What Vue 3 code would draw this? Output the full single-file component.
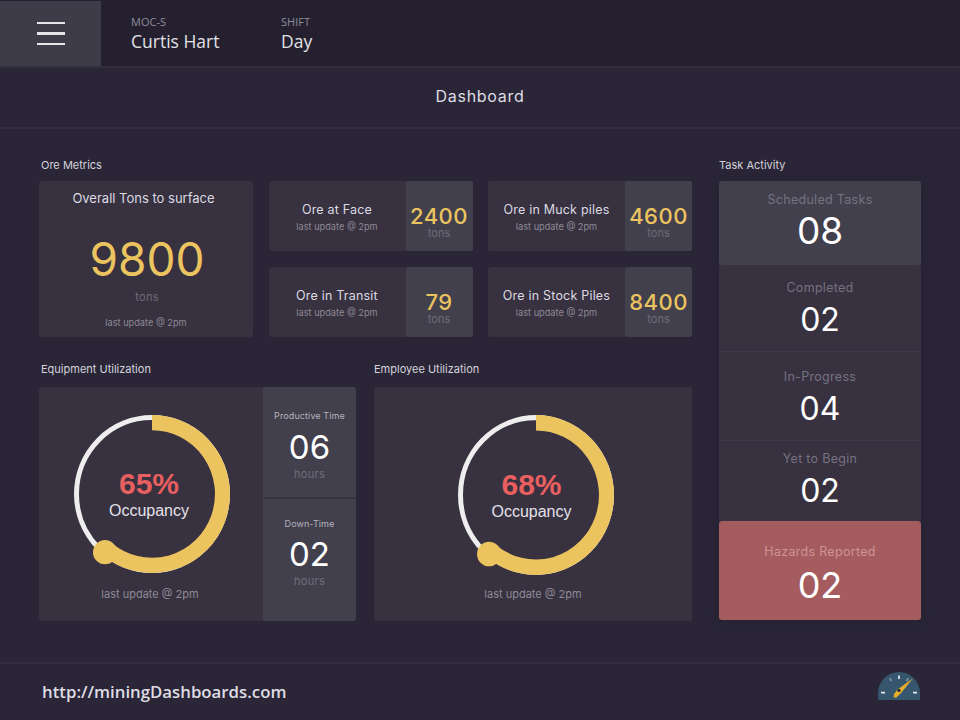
<script setup>
const oreCards = [
  { title: 'Ore at Face', value: '2400' },
  { title: 'Ore in Muck piles', value: '4600' },
  { title: 'Ore in Transit', value: '79' },
  { title: 'Ore in Stock Piles', value: '8400' }
];

const times = [
  { title: 'Productive Time', value: '06' },
  { title: 'Down-Time', value: '02' }
];

const tasks = [
  { title: 'Scheduled Tasks', value: '08', cls: 'scheduled' },
  { title: 'Completed', value: '02', cls: 'completed' },
  { title: 'In-Progress', value: '04', cls: 'progress' },
  { title: 'Yet to Begin', value: '02', cls: 'begin' },
  { title: 'Hazards Reported', value: '02', cls: 'hazards' }
];
</script>

<template>
  <div class="app">
    <header class="topbar">
      <div class="menu">
        <span></span><span></span><span></span>
      </div>
      <div class="who first">
        <div class="who-label">MOC-S</div>
        <div class="who-value">Curtis Hart</div>
      </div>
      <div class="who">
        <div class="who-label">SHIFT</div>
        <div class="who-value">Day</div>
      </div>
    </header>

    <div class="title">Dashboard</div>

    <main class="main">
      <div class="left">
        <div class="label inset">Ore Metrics</div>
        <div class="ore-grid">
          <div class="card overall">
            <div class="overall-title">Overall Tons to surface</div>
            <div class="overall-value">9800</div>
            <div class="overall-unit">tons</div>
            <div class="update small">last update @ 2pm</div>
          </div>
          <div v-for="c in oreCards" :key="c.title" class="card ore">
            <div class="ore-text">
              <div class="ore-title">{{ c.title }}</div>
              <div class="update tiny">last update @ 2pm</div>
            </div>
            <div class="ore-side">
              <div class="ore-value">{{ c.value }}</div>
              <div class="ore-unit">tons</div>
            </div>
          </div>
        </div>

        <div class="util-grid">
          <section>
            <div class="label inset">Equipment Utilization</div>
            <div class="card util">
              <div class="gauge-wrap">
                <div class="gauge">
                  <svg width="160" height="162" viewBox="0 0 160 160" preserveAspectRatio="none">
                    <circle cx="80" cy="80" r="75.5" fill="none" stroke="#eeeeee" stroke-width="5" />
                    <path d="M80 9.5A70.5 70.5 0 1 1 35.6 134.8" fill="none" stroke="#ecc45f" stroke-width="15" />
                    <circle cx="33" cy="137.5" r="12" fill="#ecc45f" />
                  </svg>
                  <div class="gauge-text">
                    <div class="pct">65%</div>
                    <div class="occ">Occupancy</div>
                  </div>
                </div>
                <div class="update plain">last update @ 2pm</div>
              </div>
              <div class="times">
                <div v-for="t in times" :key="t.title" class="time">
                  <div class="time-title">{{ t.title }}</div>
                  <div class="time-value">{{ t.value }}</div>
                  <div class="time-unit">hours</div>
                </div>
              </div>
            </div>
          </section>
          <section>
            <div class="label">Employee Utilization</div>
            <div class="card util">
              <div class="gauge-wrap employee">
                <div class="gauge">
                  <svg width="160" height="164" viewBox="0 0 160 160" preserveAspectRatio="none">
                    <circle cx="80" cy="80" r="75.5" fill="none" stroke="#eeeeee" stroke-width="5" />
                    <path d="M80 9.5A70.5 70.5 0 1 1 35.6 134.8" fill="none" stroke="#ecc45f" stroke-width="15" />
                    <circle cx="33" cy="137.5" r="12" fill="#ecc45f" />
                  </svg>
                  <div class="gauge-text">
                    <div class="pct">68%</div>
                    <div class="occ">Occupancy</div>
                  </div>
                </div>
                <div class="update plain">last update @ 2pm</div>
              </div>
            </div>
          </section>
        </div>
      </div>

      <aside class="right">
        <div class="label">Task Activity</div>
        <div class="tasks">
          <div v-for="t in tasks" :key="t.title" :class="['task', t.cls]">
            <div class="task-title">{{ t.title }}</div>
            <div class="task-value">{{ t.value }}</div>
          </div>
        </div>
      </aside>
    </main>

    <footer class="footer">
      <div class="url">http://miningDashboards.com</div>
      <svg class="speedo" width="42" height="28" viewBox="0 0 42 28">
        <path d="M0 28V21a21 21 0 0 1 42 0v7z" fill="#35566c" />
        <path d="M3 20.6h4M35 20.6h4" stroke="#e8e8e8" stroke-width="1.6" />
        <path d="M21 3.5v3.6" stroke="#e8e8e8" stroke-width="1.8" />
        <path d="M11.8 6.2l1.6 2.8M30.2 6.2l-1.6 2.8" stroke="#8a9aa6" stroke-width="1.6" />
        <path d="M35 6.2L23.5 20.6 18.5 25.4 15.5 25.4 16 22 19.8 17.2z" fill="#e5ad2a" />
        <circle cx="21" cy="18.4" r="1.6" fill="#2a2638" />
      </svg>
    </footer>
  </div>
</template>

<style scoped>
.app,
.app * {
  box-sizing: border-box;
}

.app {
  width: 960px;
  height: 720px;
  display: flex;
  flex-direction: column;
  background: #2a2638;
  font-family: Inter, "Liberation Sans", sans-serif;
  color: #e4e2e8;
  overflow: hidden;
}

.topbar {
  height: 68px;
  flex-shrink: 0;
  display: flex;
  background: #242030;
  border-bottom: 2px solid #322e40;
}

.menu {
  width: 101px;
  margin-top: 1px;
  display: flex;
  flex-direction: column;
  align-items: center;
  justify-content: center;
  gap: 8px;
  background: #3f3c49;
}

.menu span {
  width: 28px;
  height: 2.5px;
  background: #e6e5e8;
}

.who {
  padding-top: 14px;
  font-family: "Open Sans", sans-serif;
}

.who.first {
  margin-left: 30px;
  width: 150px;
}

.who-label {
  font-size: 11px;
  line-height: 16px;
  color: #8f8c98;
}

.who-value {
  font-size: 17.5px;
  line-height: 22px;
  font-weight: 500;
  color: #e2e1e5;
}

.title {
  height: 61px;
  flex-shrink: 0;
  display: flex;
  align-items: center;
  justify-content: center;
  padding-bottom: 4px;
  font-size: 16px;
  letter-spacing: 0.7px;
  color: #dfdde3;
  border-bottom: 2px solid #322e40;
}

.main {
  flex: 1;
  display: flex;
  padding: 28px 0 0 39px;
  gap: 27px;
}

.left {
  width: 653px;
}

.right {
  width: 202px;
}

.label {
  height: 17px;
  margin-bottom: 7px;
  font-size: 11px;
  line-height: 17px;
  color: #d5d3da;
}

.label.inset {
  padding-left: 2px;
}

.card {
  background: #373140;
  border-radius: 3px;
}

.ore-grid {
  display: grid;
  grid-template-columns: 214px 204px 204px;
  grid-template-rows: 70px 70px;
  column-gap: 15.5px;
  row-gap: 16px;
}

.overall {
  grid-row: span 2;
  display: flex;
  flex-direction: column;
  align-items: center;
}

.overall-title {
  margin-top: 9px;
  padding-right: 5px;
  font-size: 13px;
  line-height: 16px;
  color: #dcdae0;
}

.overall-value {
  margin-top: 25px;
  margin-left: 2px;
  font-size: 46px;
  line-height: 56px;
  color: #ecc45f;
}

.overall-unit {
  margin-top: 3px;
  margin-left: 2px;
  font-size: 11px;
  line-height: 14px;
  letter-spacing: 0.3px;
  color: #6f6b78;
}

.update {
  color: #8e8b96;
}

.update.small {
  margin-top: 13px;
  font-size: 9.2px;
  line-height: 12px;
}

.update.tiny {
  font-size: 9.2px;
  line-height: 12px;
}

.update.plain {
  margin-top: 12px;
  padding-right: 3px;
  font-size: 11px;
  line-height: 14px;
}

.ore {
  display: flex;
}

.ore-text {
  flex: 1;
  display: flex;
  flex-direction: column;
  align-items: center;
  justify-content: center;
  gap: 4px;
  padding-top: 2px;
}

.ore-title {
  font-size: 12.5px;
  line-height: 15px;
  letter-spacing: 0.2px;
  color: #dcdae0;
}

.ore-side {
  width: 67px;
  display: flex;
  flex-direction: column;
  align-items: center;
  justify-content: center;
  padding-top: 13px;
  background: #43404e;
  border-radius: 3px;
}

.ore-value {
  font-size: 22px;
  line-height: 20px;
  font-weight: 500;
  letter-spacing: 0.5px;
  color: #ecc45f;
}

.ore-unit {
  font-size: 11px;
  line-height: 14px;
  color: #6f6b78;
}

.util-grid {
  margin-top: 24px;
  display: grid;
  grid-template-columns: 317px 318px;
  column-gap: 18px;
}

.util-grid .label {
  margin-bottom: 9px;
}

.util {
  height: 234px;
  display: flex;
}

.gauge-wrap {
  flex: 1;
  display: flex;
  flex-direction: column;
  align-items: center;
  padding-top: 26px;
  padding-left: 1px;
}

.gauge-wrap.employee {
  padding-left: 5px;
}

.gauge-wrap.employee .gauge-text {
  padding-right: 8px;
}

.gauge-wrap.employee .update.plain {
  margin-top: 10px;
  padding-right: 5px;
}

.gauge {
  display: grid;
  place-items: center;
}

.gauge svg,
.gauge-text {
  grid-area: 1 / 1;
}

.gauge-text {
  padding-right: 5px;
  text-align: center;
  font-family: "Liberation Sans", sans-serif;
}

.pct {
  font-size: 30px;
  line-height: 32px;
  font-weight: 700;
  color: #e85f5f;
}

.occ {
  margin-top: 1px;
  font-size: 16px;
  line-height: 20px;
  color: #e4e2e8;
}

.times {
  width: 93px;
  display: flex;
  flex-direction: column;
  background: #43404e;
  border-radius: 3px;
}

.time {
  height: 110px;
  padding-top: 22px;
  text-align: center;
}

.time + .time {
  flex: 1;
  padding-top: 18px;
  border-top: 2px solid #38343f;
}

.time + .time .time-value {
  margin-top: 3px;
}

.time-title {
  font-size: 9px;
  line-height: 14px;
  letter-spacing: 0.1px;
  color: #b5b2bc;
}

.time-value {
  margin-top: 4px;
  font-size: 33px;
  line-height: 40px;
  color: #ffffff;
}

.time-unit {
  font-size: 11px;
  line-height: 14px;
  letter-spacing: 0.3px;
  color: #6f6b78;
}

.tasks {
  display: flex;
  flex-direction: column;
  box-shadow: 0 2px 14px rgba(24, 20, 34, 0.35);
  border-radius: 3px;
}

.task {
  background: #373140;
  text-align: center;
}

.task + .task {
  border-top: 1px solid #3f3a49;
}

.task-title {
  font-size: 12.5px;
  line-height: 16px;
  letter-spacing: 0.3px;
  color: #757280;
}

.task-value {
  margin-top: 4px;
  font-size: 32px;
  line-height: 40px;
  color: #ffffff;
}

.scheduled {
  height: 84px;
  padding-top: 11px;
  background: #43404e;
  border-radius: 3px;
}

.scheduled .task-value {
  margin-top: 1px;
  font-size: 37px;
  line-height: 44px;
}

.completed {
  height: 86px;
  padding-top: 15px;
  border-top: none !important;
}

.progress {
  height: 89px;
  padding-top: 17px;
}

.begin {
  height: 81px;
  padding-top: 10px;
}

.hazards {
  height: 99px;
  padding-top: 23px;
  background: #a55c5e;
  border-top: none !important;
  border-radius: 3px;
}

.hazards .task-title {
  color: #cd9496;
}

.hazards .task-value {
  margin-top: 3px;
  font-size: 36px;
  line-height: 44px;
}

.footer {
  height: 58px;
  flex-shrink: 0;
  display: flex;
  align-items: center;
  justify-content: space-between;
  padding: 0 40px 2px 42px;
  border-top: 2px solid #322e40;
}

.url {
  font-family: "Open Sans", sans-serif;
  font-size: 16.8px;
  font-weight: 600;
  color: #dfdde3;
}

.speedo {
  align-self: flex-start;
  margin-top: 7.5px;
}
</style>

<style>
body {
  background: #2a2638;
}
</style>
